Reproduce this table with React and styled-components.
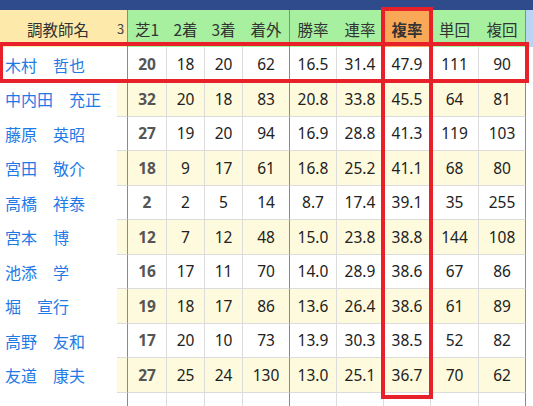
import React from "react";
import styled, { createGlobalStyle } from "styled-components";

const GlobalStyle = createGlobalStyle`
  html, body {
    margin: 0;
    padding: 0;
    background: #ffffff;
  }
  body {
    font-family: "Noto Sans", "Noto Sans CJK JP", sans-serif;
    color: #222;
    overflow: hidden;
  }
`;

const COLS = "117px 11px 39px 38px 38px 47px 47px 47px 47px 48px 47px 1fr";

const Page = styled.div`
  position: relative;
  width: 533px;
  height: 406px;
  overflow: hidden;
`;

const TopBar = styled.div`
  height: 10px;
  background: #2f4b8c;
`;

const Row = styled.div`
  display: grid;
  grid-template-columns: ${COLS};
  height: ${(p) => p.$h}px;
`;

const HeadCell = styled.div`
  display: flex;
  align-items: center;
  justify-content: center;
  font-family: "Noto Sans CJK JP", sans-serif;
  font-size: 15.5px;
  color: #333;
  font-weight: ${(p) => (p.$bold ? 700 : 400)};
  background: ${(p) => p.$bg};
  border-right: 1px solid ${(p) => (p.$dark ? "#8a8a8a" : "transparent")};
  overflow: hidden;
`;

const Stub = styled.span`
  font-size: 13px;
  margin-left: -3px;
  color: #444;
`;

const NameCell = styled.div`
  display: flex;
  align-items: center;
  padding-left: 5px;
  font-family: "Noto Sans CJK JP", sans-serif;
  font-size: 16px;
  color: #1f7ae6;
  background: #ffffff;
  white-space: pre;
`;

const Cell = styled.div`
  display: flex;
  align-items: center;
  justify-content: center;
  font-size: 15.5px;
  color: ${(p) => (p.$bold ? "#555" : "#222")};
  font-weight: ${(p) => (p.$bold ? 700 : 400)};
  background: ${(p) => (p.$alt ? "#fefadd" : "#ffffff")};
  border-bottom: 1px solid #dcdcdc;
  border-right: 1px solid ${(p) => (p.$dark ? "#8a8a8a" : "#dcdcdc")};
`;

const Blank = styled.div`
  background: #ffffff;
`;

const Highlight = styled.div`
  position: absolute;
  left: ${(p) => p.$x}px;
  top: ${(p) => p.$y}px;
  width: ${(p) => p.$w}px;
  height: ${(p) => p.$h}px;
  border: 4px solid #e8202a;
  box-sizing: border-box;
  pointer-events: none;
`;

const headers = [
  ["芝1"], ["2着"], ["3着"], ["着外", true], ["勝率"], ["連率"],
  ["複率", false, true], ["単回"], ["複回", true],
];

const rows = [
  ["木村\u3000哲也", 20, 18, 20, 62, "16.5", "31.4", "47.9", 111, 90],
  ["中内田\u3000充正", 32, 20, 18, 83, "20.8", "33.8", "45.5", 64, 81],
  ["藤原\u3000英昭", 27, 19, 20, 94, "16.9", "28.8", "41.3", 119, 103],
  ["宮田\u3000敬介", 18, 9, 17, 61, "16.8", "25.2", "41.1", 68, 80],
  ["高橋\u3000祥泰", 2, 2, 5, 14, "8.7", "17.4", "39.1", 35, 255],
  ["宮本\u3000博", 12, 7, 12, 48, "15.0", "23.8", "38.8", 144, 108],
  ["池添\u3000学", 16, 17, 11, 70, "14.0", "28.9", "38.6", 67, 86],
  ["堀\u3000宣行", 19, 18, 17, 86, "13.6", "26.4", "38.6", 61, 89],
  ["高野\u3000友和", 17, 20, 10, 73, "13.9", "30.3", "38.5", 52, 82],
  ["友道\u3000康夫", 27, 25, 24, 130, "13.0", "25.1", "36.7", 70, 62],
  ["", "", "", "", "", "", "", "", "", ""],
];

export default function App() {
  return (
    <Page>
      <GlobalStyle />
      <TopBar />
      <Row $h={37}>
        <HeadCell $bg="#fde9a9">調教師名</HeadCell>
        <HeadCell $bg="#fde9a9" $dark>
          <Stub>3</Stub>
        </HeadCell>
        {headers.map(([label, dark, orange]) => (
          <HeadCell
            key={label}
            $bg={orange ? "#f8a857" : "#a6f0a0"}
            $bold={orange}
            $dark={dark}
          >
            {label}
          </HeadCell>
        ))}
        <HeadCell $bg="#b8d6f4" />
      </Row>
      {rows.map((r, ri) => {
        const alt = ri % 2 === 1;
        const [name, ...nums] = r;
        return (
          <Row key={ri} $h={ri === 0 ? 35 : 34.5}>
            <NameCell>{name}</NameCell>
            <Cell $alt={alt} $dark />
            {nums.map((n, ci) => (
              <Cell key={ci} $alt={alt} $bold={ci === 0} $dark={ci === 3 || ci === 8}>
                {n}
              </Cell>
            ))}
            <Blank />
          </Row>
        );
      })}
      <Highlight $x={-1} $y={42} $w={530} $h={41} />
      <Highlight $x={381} $y={7} $w={52} $h={392} />
    </Page>
  );
}
